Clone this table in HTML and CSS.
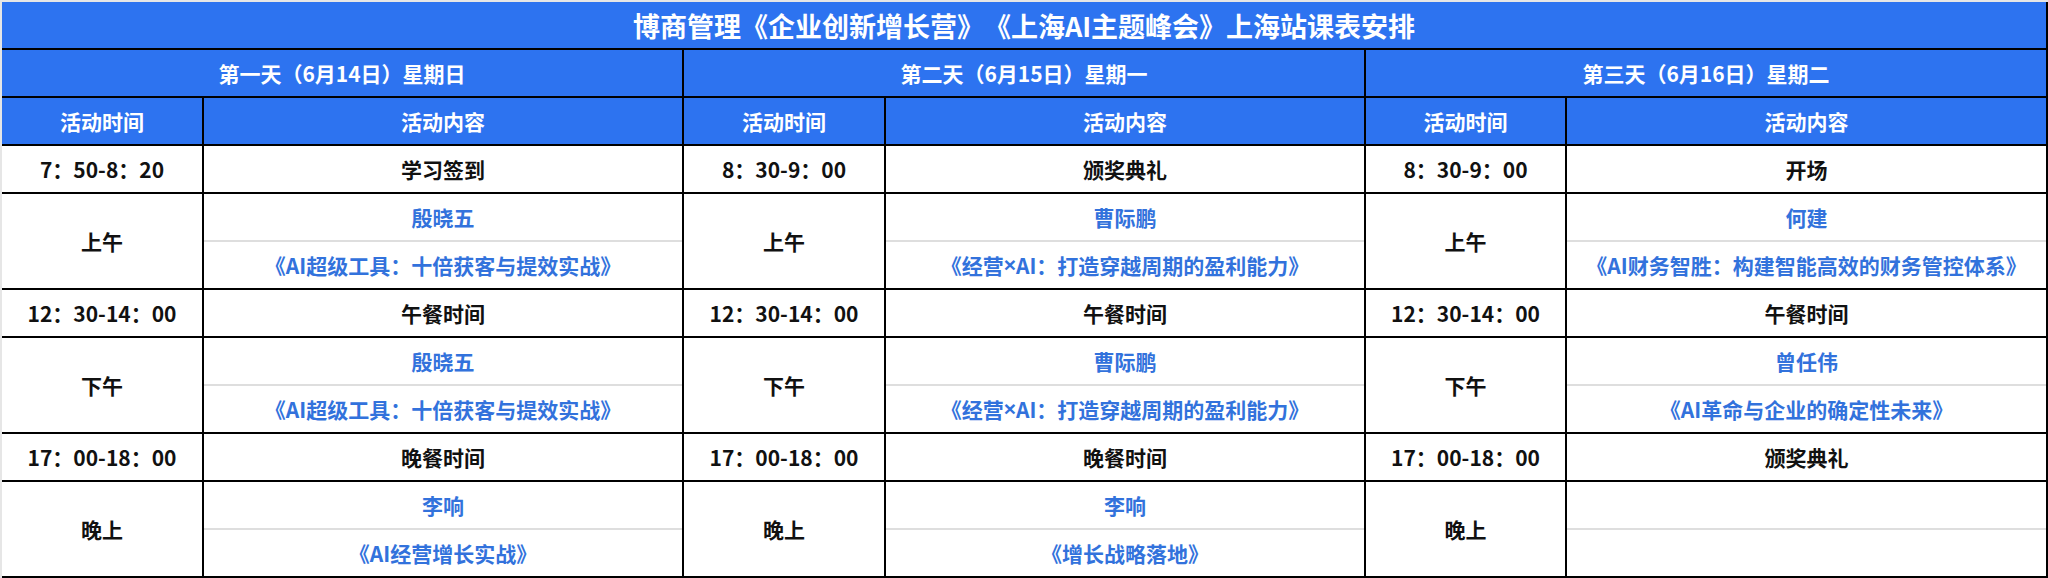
FILE: index.html
```html
<!DOCTYPE html>
<html lang="zh-CN">
<head>
<meta charset="utf-8">
<title>课表安排</title>
<link rel="stylesheet" href="styles.css">
</head>
<body>
<div class="sheet">
  <div class="title">博商管理《企业创新增长营》《上海AI主题峰会》上海站课表安排</div>

  <div class="day">第一天（6月14日）星期日</div>
  <div class="day">第二天（6月15日）星期一</div>
  <div class="day">第三天（6月16日）星期二</div>

  <div class="hd">活动时间</div><div class="hd">活动内容</div>
  <div class="hd">活动时间</div><div class="hd">活动内容</div>
  <div class="hd">活动时间</div><div class="hd">活动内容</div>

  <div class="cell">7：50-8：20</div><div class="cell">学习签到</div>
  <div class="cell">8：30-9：00</div><div class="cell">颁奖典礼</div>
  <div class="cell">8：30-9：00</div><div class="cell">开场</div>

  <div class="cell">上午</div>
  <div class="split"><div class="half">殷晓五</div><div class="half">《AI超级工具：十倍获客与提效实战》</div></div>
  <div class="cell">上午</div>
  <div class="split"><div class="half">曹际鹏</div><div class="half">《经营<span class="x">×</span>AI：打造穿越周期的盈利能力》</div></div>
  <div class="cell">上午</div>
  <div class="split"><div class="half">何建</div><div class="half">《AI财务智胜：构建智能高效的财务管控体系》</div></div>

  <div class="cell">12：30-14：00</div><div class="cell">午餐时间</div>
  <div class="cell">12：30-14：00</div><div class="cell">午餐时间</div>
  <div class="cell">12：30-14：00</div><div class="cell">午餐时间</div>

  <div class="cell">下午</div>
  <div class="split"><div class="half">殷晓五</div><div class="half">《AI超级工具：十倍获客与提效实战》</div></div>
  <div class="cell">下午</div>
  <div class="split"><div class="half">曹际鹏</div><div class="half">《经营<span class="x">×</span>AI：打造穿越周期的盈利能力》</div></div>
  <div class="cell">下午</div>
  <div class="split"><div class="half">曾任伟</div><div class="half">《AI革命与企业的确定性未来》</div></div>

  <div class="cell">17：00-18：00</div><div class="cell">晚餐时间</div>
  <div class="cell">17：00-18：00</div><div class="cell">晚餐时间</div>
  <div class="cell">17：00-18：00</div><div class="cell">颁奖典礼</div>

  <div class="cell">晚上</div>
  <div class="split"><div class="half">李响</div><div class="half">《AI经营增长实战》</div></div>
  <div class="cell">晚上</div>
  <div class="split"><div class="half">李响</div><div class="half">《增长战略落地》</div></div>
  <div class="cell">晚上</div>
  <div class="split"><div class="half"></div><div class="half"></div></div>
</div>
</body>
</html>
```

FILE: styles.css
```css
html, body {
  margin: 0;
  padding: 0;
  background: #e6e6e6;
}

body {
  padding: 2px 0 0 2px;
  font-family: "Noto Sans CJK SC", "Liberation Sans", sans-serif;
  font-weight: 700;
  color: #111;
  text-spacing-trim: space-all;
}

.sheet {
  width: 2044px;
  display: grid;
  grid-template-columns: 200px 478px 200px 478px 199px 479px;
  grid-template-rows: 46px 46px 46px 46px 94px 46px 94px 46px 94px;
  gap: 2px;
  background: #000;
  border-right: 2px solid #000;
  border-bottom: 2px solid #000;
}

.title,
.day,
.hd,
.cell,
.half {
  display: flex;
  align-items: center;
  justify-content: center;
  white-space: nowrap;
}

.title {
  grid-column: 1 / -1;
  background: #2d73f0;
  color: #fff;
  font-size: 27px;
}

.day {
  grid-column: span 2;
  background: #2d73f0;
  color: #fff;
  font-size: 21px;
}

.hd {
  background: #2d73f0;
  color: #fff;
  font-size: 21px;
}

.cell {
  background: #fff;
  font-size: 21px;
  color: #111;
}

.split {
  display: flex;
  flex-direction: column;
  background: #fff;
}

.half {
  flex: 1;
  font-size: 21px;
  color: #3272dc;
}

.half + .half {
  border-top: 2px solid #dedede;
}

.x {
  font-family: "Liberation Sans", sans-serif;
}
```
